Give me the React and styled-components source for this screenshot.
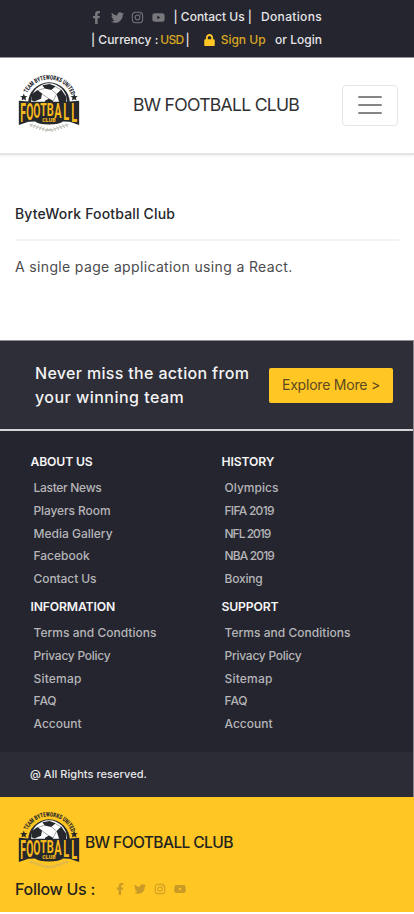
import React from 'react';
import styled, { createGlobalStyle } from 'styled-components';
import { FaFacebookF, FaTwitter, FaInstagram, FaYoutube, FaLock } from 'react-icons/fa';

const GlobalStyle = createGlobalStyle`
  * { box-sizing: border-box; }
  body {
    margin: 0;
    background: #fff;
    font-family: Inter, "Open Sans", sans-serif;
    overflow: hidden;
  }
  a { color: inherit; text-decoration: none; }
`;

const Page = styled.div`
  width: 414px;
  height: 914px;
`;

const TopBar = styled.div`
  height: 57px;
  padding-top: 6px;
  background: #25252f;
  color: #e6e6e8;
  box-shadow: 0 1px 0 #92929a;
`;

const TopRow = styled.div`
  display: flex;
  align-items: center;
  height: 22.5px;
  padding-left: 91px;
`;

const TopText = styled.a`
  font-size: 12px;
  font-weight: 500;
  line-height: 22px;
  white-space: pre;
  letter-spacing: ${(p) => p.$track || 0}px;
  margin-left: ${(p) => p.$gap || 0}px;
  color: ${(p) => (p.$gold ? '#dba822' : 'inherit')};
`;

const Social = styled.div`
  display: flex;
  align-items: center;
  justify-content: space-between;
  width: ${(p) => (p.$small ? 72 : 75)}px;
  margin-left: -1px;
  color: ${(p) => (p.$small ? '#c99a26' : '#77777c')};
  svg { display: block; height: ${(p) => (p.$small ? 12 : 13)}px; width: auto; }
`;

const LockIcon = styled(FaLock)`
  width: 11px;
  height: 12px;
  margin-left: 14px;
  color: #ffc624;
`;

const NavBar = styled.header`
  display: flex;
  align-items: center;
  height: 96px;
  padding: 0 16px 0 18px;
  box-shadow: 0 2px 1px #e4e4e4, 0 4px 3px #f6f6f6;
`;

const NavTitle = styled.h1`
  margin: 0 0 0 53px;
  font-size: 17.6px;
  font-weight: 400;
  letter-spacing: -0.73px;
  line-height: 24px;
  white-space: nowrap;
  color: #303033;
`;

const LogoSvg = styled.svg`
  display: block;
  flex: none;
  width: 62px;
  height: 59px;
  margin-top: ${(p) => p.$lift}px;
`;

const MenuButton = styled.button`
  display: flex;
  flex-direction: column;
  align-items: center;
  justify-content: center;
  gap: 6px;
  width: 56px;
  height: 41px;
  margin-left: auto;
  padding: 0;
  border: 1px solid #e6e6e6;
  border-radius: 4px;
  background: #fff;
`;

const MenuBar = styled.span`
  width: 24px;
  height: 2px;
  border-radius: 1px;
  background: #858585;
`;

const Main = styled.main`
  height: 187px;
  padding: 48px 15px 0;
`;

const Heading = styled.h2`
  margin: 0;
  height: 40px;
  border-bottom: 2px solid #f3f3f3;
  font-size: 14px;
  font-weight: 500;
  letter-spacing: 0.17px;
  line-height: 25px;
  color: #24272b;
`;

const Paragraph = styled.p`
  margin: 14px 0 0;
  font-size: 14px;
  letter-spacing: 0.35px;
  line-height: 24px;
  color: #4b4b4e;
`;

const Dark = styled.div`
  border-right: 1px solid #85858b;
`;

const Promo = styled.section`
  display: flex;
  align-items: center;
  justify-content: space-between;
  height: 91px;
  padding: 0 20px 0 35px;
  border-top: 1px solid #8f8f94;
  border-bottom: 2px solid #d4d4d6;
  background: #2e2e38;
`;

const PromoText = styled.p`
  margin: 0;
  font-size: 16px;
  font-weight: 500;
  letter-spacing: ${(p) => p.$track || 0}px;
  line-height: 24px;
  color: #f3f3f4;
`;

const PromoButton = styled.a`
  width: 124px;
  height: 35px;
  border-radius: 2px;
  background: #ffc624;
  color: #5b4a21;
  font-size: 14px;
  line-height: 34px;
  text-align: center;
  letter-spacing: -0.21px;
`;

const Links = styled.section`
  display: grid;
  grid-template-columns: 191px 191px;
  grid-template-rows: 145px 145px;
  height: 321px;
  padding: 19px 0 0 30.5px;
  background: #25252f;
`;

const ColumnTitle = styled.h3`
  margin: 0 0 3px;
  font-size: 12.2px;
  font-weight: 600;
  line-height: 24px;
  letter-spacing: -0.15px;
  color: #f5f5f6;
`;

const ColumnLink = styled.a`
  display: block;
  margin-left: 3px;
  font-size: 12px;
  font-weight: 500;
  line-height: 22.8px;
  white-space: nowrap;
  letter-spacing: ${(p) => p.$track || 0}px;
  color: #b5b5b8;
`;

const Rights = styled.div`
  height: 45px;
  padding-left: 30px;
  background: #2c2c36;
  color: #e8e8ea;
  font-size: 11px;
  font-weight: 500;
  letter-spacing: 0.05px;
  line-height: 44px;
`;

const Footer = styled.footer`
  height: 115px;
  padding: 13px 0 0 15px;
  background: #ffc624;
  color: #24241f;
`;

const Brand = styled.div`
  display: flex;
  align-items: center;
  height: 62px;
  padding-left: 3px;
`;

const BrandName = styled.strong`
  margin: 4px 0 0 5px;
  font-size: 15.6px;
  font-weight: 500;
  letter-spacing: -0.64px;
  line-height: 24px;
`;

const Follow = styled.div`
  display: flex;
  align-items: center;
  gap: 20px;
  height: 33px;
  font-size: 16px;
  font-weight: 500;
  letter-spacing: -0.28px;
`;

const LETTERS = [
  ['F', 70, 139, 196, 18], ['O', 90, 138, 189, 18], ['O', 111, 137, 182, 18], ['T', 131, 137, 177, 18],
  ['B', 152, 137, 177, 19], ['A', 175, 137, 182, 19], ['L', 200, 138, 189, 19], ['L', 224, 139, 196, 19],
];

function Logo({ id, lift, leaves, gold }) {
  const leafPairs = [0, 1, 2, 3, 4, 5];
  return (
    <LogoSvg $lift={lift} viewBox="55 50 186 178" aria-label="Football Club">
      <path id={id} d="M80 115 A71 68 0 0 1 216 115" fill="none" />
      <text fontFamily="Roboto" fontWeight="900" fontSize="19" fill="#25282c">
        <textPath href={`#${id}`} startOffset="7" textLength="170" lengthAdjust="spacingAndGlyphs">TEAM BYTEWORKS UNITED</textPath>
      </text>
      <circle cx="148" cy="138" r="63" fill="#25282c" />
      <circle cx="148" cy="132" r="54" fill="#fff" />
      <path d="M128 84l22-4 18 7-13 11-20-4zM95 112l18-14 14 11-3 16-20 8-9-4zM171 110l14-13 16 23-2 20-20-5zM136 131l12-7 12 7v8h-24z" fill="#25282c" />
      <path d="M135 93l-20 6M155 97l16 14M126 109l22 16M171 111l-11 21M167 88l18 10" stroke="#777" strokeWidth="2" fill="none" />
      <path d="M72 109l3 7 8 1-6 5 2 8-7-4-7 4 2-8-6-5 8-1zM224 109l3 7 8 1-6 5 2 8-7-4-7 4 2-8-6-5 8-1z" fill="#25282c" />
      <path d="M57 131l38 3h106l38-3v73l-29-10-20-1q-10 9-42 9t-42-9l-20 1-29 10z" fill="#25282c" />
      {LETTERS.map(([ch, cx, top, base, w], i) => (
        <text
          key={i}
          transform={`translate(${cx} ${base}) scale(${w / 11.5} ${(base - top) / 14.2})`}
          textAnchor="middle"
          fontFamily="Roboto"
          fontWeight="700"
          fontSize="20"
          fill={gold}
        >
          {ch}
        </text>
      ))}
      <text x="148" y="195" textAnchor="middle" fontFamily="Roboto" fontWeight="900" fontSize="18" textLength="40" lengthAdjust="spacingAndGlyphs" fill={gold}>CLUB</text>
      <g stroke={leaves} strokeWidth="3" fill="none">
        {leafPairs.map((n) => (
          <path
            key={n}
            d={`M${89 + n * 9} ${203 + n * 3}l9 1m-6 6l6-11M${207 - n * 9} ${203 + n * 3}l-9 1m6 6l-6-11`}
          />
        ))}
        <path d="M142 222l12-6M142 216l12 6" />
      </g>
    </LogoSvg>
  );
}

function SocialIcons({ small }) {
  return (
    <Social $small={small}>
      <FaFacebookF />
      <FaTwitter />
      <FaInstagram />
      <FaYoutube />
    </Social>
  );
}

const COLUMNS = [
  ['ABOUT US', [['Laster News', -0.3], ['Players Room', -0.1], ['Media Gallery', 0], ['Facebook', 0], ['Contact Us', -0.08]]],
  ['HISTORY', [['Olympics', 0.04], ['FIFA 2019', -0.72], ['NFL 2019', -1], ['NBA 2019', -0.86], ['Boxing', -0.21]]],
  ['INFORMATION', [['Terms and Condtions', 0.02], ['Privacy Policy', -0.25], ['Sitemap', 0.19], ['FAQ', -0.09], ['Account', 0]]],
  ['SUPPORT', [['Terms and Conditions', 0.03], ['Privacy Policy', -0.25], ['Sitemap', 0.19], ['FAQ', -0.09], ['Account', 0]]],
];

export default function App() {
  return (
    <Page>
      <GlobalStyle />
      <TopBar>
        <TopRow>
          <SocialIcons />
          <TopText $gap={8.5}>| Contact Us |</TopText>
          <TopText $gap={9} $track={0.34}>Donations</TopText>
        </TopRow>
        <TopRow>
          <TopText>| Currency :</TopText>
          <TopText $gap={2} $gold $track={-0.7}>USD</TopText>
          <TopText $gap={2}>|</TopText>
          <LockIcon />
          <TopText $gap={6} $gold>Sign Up</TopText>
          <TopText $gap={9.5}>or Login</TopText>
        </TopRow>
      </TopBar>
      <NavBar>
        <Logo id="nav-arc" lift={-4} leaves="#b9b9b4" gold="#f8b91c" />
        <NavTitle>BW FOOTBALL CLUB</NavTitle>
        <MenuButton aria-label="Menu">
          <MenuBar />
          <MenuBar />
          <MenuBar />
        </MenuButton>
      </NavBar>
      <Main>
        <Heading>ByteWork Football Club</Heading>
        <Paragraph>A single page application using a React.</Paragraph>
      </Main>
      <Dark>
        <Promo>
          <div>
            <PromoText $track={0.33}>Never miss the action from</PromoText>
            <PromoText $track={0.47}>your winning team</PromoText>
          </div>
          <PromoButton>Explore More &gt;</PromoButton>
        </Promo>
        <Links>
          {COLUMNS.map(([title, links]) => (
            <nav key={title}>
              <ColumnTitle>{title}</ColumnTitle>
              {links.map(([label, track]) => (
                <ColumnLink key={label} $track={track}>{label}</ColumnLink>
              ))}
            </nav>
          ))}
        </Links>
        <Rights>@ All Rights reserved.</Rights>
      </Dark>
      <Footer>
        <Brand>
          <Logo id="footer-arc" lift={-1} leaves="#d8b458" gold="#f8b91c" />
          <BrandName>BW FOOTBALL CLUB</BrandName>
        </Brand>
        <Follow>
          Follow Us :
          <SocialIcons small />
        </Follow>
      </Footer>
    </Page>
  );
}
